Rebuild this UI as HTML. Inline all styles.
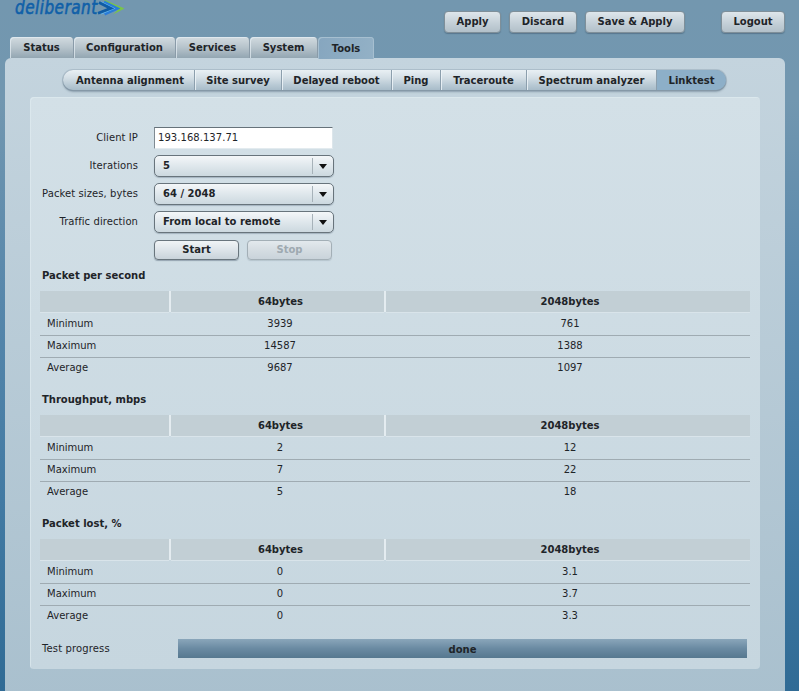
<!DOCTYPE html>
<html><head><meta charset="utf-8"><title>Linktest</title>
<style>
html,body{margin:0;padding:0}
body{width:799px;height:691px;overflow:hidden;position:relative;font-family:"DejaVu Sans","Liberation Sans",sans-serif;font-size:10px;color:#1e2428;
background:linear-gradient(to bottom,#7397af 0px,#7297b0 100px,#5787ab 300px,#427aa3 500px,#306b95 691px);}
.abs{position:absolute}
#logo{position:absolute;left:15px;top:-2.5px;font:italic 17px/20px "DejaVu Sans Condensed","DejaVu Sans","Liberation Sans",sans-serif;color:#1060a8;letter-spacing:0.45px;-webkit-text-stroke:0.5px #1060a8;transform:scaleY(1.16);transform-origin:0 15.9px}
.btn{position:absolute;top:11px;height:20px;border:1px solid #7f8f99;border-radius:4px;background:linear-gradient(#dee6eb,#c2ced6 60%,#b2c0c9);font-weight:bold;font-size:10px;text-align:center;line-height:20px;box-shadow:0 1px 1px rgba(40,60,80,.35)}
.tab{position:absolute;top:37px;height:21px;border-radius:4px 4px 0 0;background:linear-gradient(#d2dbe0,#b6c3cb 50%,#93a6b2);font-weight:bold;font-size:10px;text-align:center;line-height:21px;box-shadow:inset 1px 1px 0 rgba(230,238,243,.7),1px 0 0 #8a9ba8}
.tab.act{background:linear-gradient(100deg,#86a6bf,#93b1c6);height:22px;line-height:23px;box-shadow:inset 1px 1px 0 #a6bfd0,inset -1px 0 0 #a6bfd0}
#outer{position:absolute;left:5px;top:58px;width:780px;height:640px;border-radius:6px;background:linear-gradient(#c4d4de,#a9c0ce)}
#inner{position:absolute;left:30px;top:97px;width:730px;height:572px;border-radius:4px;background:linear-gradient(#d3e0e7,#c6d6df);box-shadow:inset 1px 1px 0 rgba(225,236,242,.6)}
#sub{position:absolute;left:63px;top:70px;height:20px;width:663px;border-radius:11px;overflow:hidden;background:#8c9fad;box-shadow:0 1px 0 #8598a7,0 2px 2px rgba(70,95,115,.45),0 0 0 1px rgba(130,150,165,.35)}
.st{position:absolute;top:0;height:20px;background:linear-gradient(#e9f0f4,#d3dee5 40%,#b8c9d4 75%,#a8bcc9);font-weight:bold;font-size:10px;text-align:center;line-height:21px;box-shadow:inset 1px 0 0 rgba(240,246,250,.8)}
.st.act{background:#8dafc8;box-shadow:none}
.lbl{position:absolute;left:20px;width:118px;text-align:right;font-size:10px;line-height:12px;letter-spacing:.08px;margin-top:1px}
.sel{position:absolute;left:154px;width:178px;height:20px;border:1px solid #68747c;border-radius:5px;background:linear-gradient(#f4f7f9,#dfe7ec 50%,#ccd8df);font-weight:bold;font-size:10px;line-height:20px;box-shadow:0 1px 1px rgba(60,80,100,.3)}
.sel span{position:absolute;left:8px}
.sel i{position:absolute;right:20px;top:2px;height:16px;border-left:1px solid #a7b2b9}
.sel b{position:absolute;right:6px;top:8px;border:4px solid transparent;border-top:5px solid #111;border-bottom:0}
.h{position:absolute;left:42px;font-weight:bold;font-size:10px;line-height:12px;margin-top:1px}
.tbl{position:absolute;left:40px;width:710px}
.th{position:absolute;top:0;height:21px;box-shadow:0 1px 0 #d9e4ea;background:#c2cfd5;font-weight:bold;font-size:10px;text-align:center;line-height:21px}
.row{position:absolute;left:0;width:710px;height:22px;border-bottom:1px solid #9fabb2;line-height:22px}
.row.last{border-bottom:0}
.row span{position:absolute;top:0;text-align:center}
.row .c0{left:7px;text-align:left}
.row .c1{left:133px;width:214px}
.row .c2{left:348px;width:364px}
</style></head><body>
<div id="logo">deliberant</div>
<svg class="abs" style="left:93px;top:0" width="36" height="18" viewBox="93 0 36 18">
<path d="M105 0 L124.5 8.5 L113 14.5 L119.5 8.5 L104 1.2 Z" fill="#7ad32a" opacity=".8"/>
<path d="M104 2 L117 8.5 L104.5 14.2" fill="none" stroke="#2a7cd8" stroke-width="3"/>
<path d="M101.2 2 L114.2 8.5 L101 14" fill="none" stroke="#62b8ee" stroke-width="1.1"/>
<path d="M99 2.6 L110.8 8.4 L98 13.3" fill="none" stroke="#0f5ca5" stroke-width="2.8" stroke-linejoin="miter"/>
</svg>
<div class="btn" style="left:444px;width:55px">Apply</div>
<div class="btn" style="left:509px;width:66px">Discard</div>
<div class="btn" style="left:585px;width:98px">Save &amp; Apply</div>
<div class="btn" style="left:721px;width:62px">Logout</div>

<div id="outer"></div>
<div class="tab" style="left:10px;width:63px">Status</div>
<div class="tab" style="left:74px;width:101px">Configuration</div>
<div class="tab" style="left:176px;width:73px">Services</div>
<div class="tab" style="left:250px;width:67px">System</div>
<div class="tab act" style="left:318px;width:56px">Tools</div>

<div id="sub">
<div class="st" style="left:0;width:128px;padding-left:3px;box-shadow:none">Antenna alignment</div>
<div class="st" style="left:132px;width:86px">Site survey</div>
<div class="st" style="left:219px;width:109px">Delayed reboot</div>
<div class="st" style="left:329px;width:48px">Ping</div>
<div class="st" style="left:378px;width:85px">Traceroute</div>
<div class="st" style="left:464px;width:129px">Spectrum analyzer</div>
<div class="st act" style="left:594px;width:69px">Linktest</div>
</div>
<div id="inner"></div>

<div class="lbl" style="top:131px">Client IP</div>
<div class="abs" style="left:154px;top:127px;width:177px;height:20px;border:1px solid;border-color:#66727a #dde6eb #e3ebef #7f8a92;background:#fff;font-size:10px;line-height:20px;letter-spacing:.05px"><span style="position:absolute;left:3px">193.168.137.71</span></div>
<div class="lbl" style="top:159px">Iterations</div>
<div class="sel" style="top:155px"><span>5</span><i></i><b></b></div>
<div class="lbl" style="top:187px">Packet sizes, bytes</div>
<div class="sel" style="top:183px"><span>64 / 2048</span><i></i><b></b></div>
<div class="lbl" style="top:215px">Traffic direction</div>
<div class="sel" style="top:211px"><span>From local to remote</span><i></i><b></b></div>
<div class="btn" style="left:154px;top:240px;width:83px;height:18px;line-height:18px;border-color:#69757d;background:linear-gradient(#f0f4f6,#dde4e9 50%,#c9d3da)">Start</div>
<div class="btn" style="left:247px;top:240px;width:83px;height:18px;line-height:18px;color:#9ea9b0;border-color:#a3afb6;background:linear-gradient(#e3e9ed,#d5dde2 50%,#c9d3da);box-shadow:0 1px 1px rgba(40,60,80,.15)">Stop</div>

<div class="h" style="top:269px">Packet per second</div>
<div class="tbl" style="top:291px">
<div class="th" style="left:0;width:129px;box-shadow:2px 0 0 #e4ecf0,0 1px 0 #d9e4ea"></div><div class="th" style="left:131px;width:207px;padding-left:6px;box-shadow:2px 0 0 #e4ecf0,0 1px 0 #d9e4ea">64bytes</div><div class="th" style="left:346px;width:360px;padding-left:4px">2048bytes</div>
<div class="row" style="top:22px"><span class="c0">Minimum</span><span class="c1">3939</span><span class="c2">761</span></div>
<div class="row" style="top:44px"><span class="c0">Maximum</span><span class="c1">14587</span><span class="c2">1388</span></div>
<div class="row last" style="top:66px"><span class="c0">Average</span><span class="c1">9687</span><span class="c2">1097</span></div>
</div>

<div class="h" style="top:393px">Throughput, mbps</div>
<div class="tbl" style="top:415px">
<div class="th" style="left:0;width:129px;box-shadow:2px 0 0 #e4ecf0,0 1px 0 #d9e4ea"></div><div class="th" style="left:131px;width:207px;padding-left:6px;box-shadow:2px 0 0 #e4ecf0,0 1px 0 #d9e4ea">64bytes</div><div class="th" style="left:346px;width:360px;padding-left:4px">2048bytes</div>
<div class="row" style="top:22px"><span class="c0">Minimum</span><span class="c1">2</span><span class="c2">12</span></div>
<div class="row" style="top:44px"><span class="c0">Maximum</span><span class="c1">7</span><span class="c2">22</span></div>
<div class="row last" style="top:66px"><span class="c0">Average</span><span class="c1">5</span><span class="c2">18</span></div>
</div>

<div class="h" style="top:517px">Packet lost, %</div>
<div class="tbl" style="top:539px">
<div class="th" style="left:0;width:129px;box-shadow:2px 0 0 #e4ecf0,0 1px 0 #d9e4ea"></div><div class="th" style="left:131px;width:207px;padding-left:6px;box-shadow:2px 0 0 #e4ecf0,0 1px 0 #d9e4ea">64bytes</div><div class="th" style="left:346px;width:360px;padding-left:4px">2048bytes</div>
<div class="row" style="top:22px"><span class="c0">Minimum</span><span class="c1">0</span><span class="c2">3.1</span></div>
<div class="row" style="top:44px"><span class="c0">Maximum</span><span class="c1">0</span><span class="c2">3.7</span></div>
<div class="row last" style="top:66px"><span class="c0">Average</span><span class="c1">0</span><span class="c2">3.3</span></div>
</div>

<div class="abs" style="left:42px;top:642.5px;font-size:10px;line-height:12px;letter-spacing:.13px">Test progress</div>
<div class="abs" style="left:178px;top:639px;width:569px;height:19px;background:linear-gradient(#8aa6ba,#6a8aa2 50%,#56788f);font-weight:bold;font-size:10px;text-align:center;line-height:22px">done</div>
</body></html>
